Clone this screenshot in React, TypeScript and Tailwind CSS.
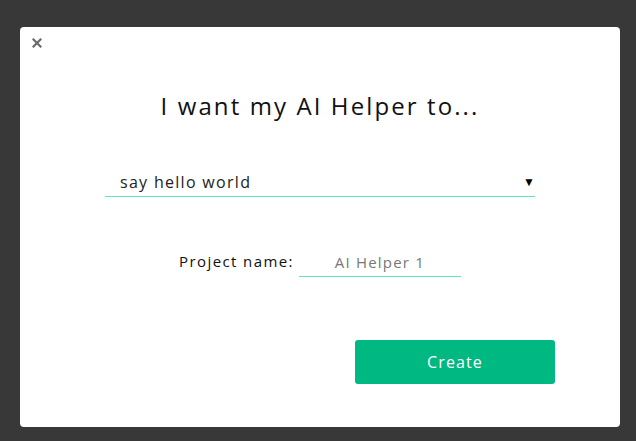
import React from "react";

export default function App() {
  return (
    <div className="w-[636px] h-[441px] bg-[#383838] pt-[27px] pl-[20px]" style={{ fontFamily: "'Open Sans', Lato, sans-serif" }}>
      <div className="relative w-[600px] h-[400px] bg-white rounded-[4px] flex flex-col items-center">
        {/* close */}
        <button className="absolute left-[12px] top-[11px] w-[10px] h-[10px]">
          <svg viewBox="0 0 10 10" width="10" height="10">
            <path d="M1.5 1.5 L8.5 8.5 M8.5 1.5 L1.5 8.5" stroke="#6b6b6b" strokeWidth="2.2" strokeLinecap="square" />
          </svg>
        </button>

        <h1 className="mt-[63px] text-[24px] leading-[32px] text-[#111] tracking-[2.1px]">I want my AI Helper to...</h1>

        <div className="mt-[45px] w-[430px] h-[30px] flex items-center justify-between pl-[15px] pr-0 border-b-[1px] border-solid border-[#62e3c3]">
          <span className="text-[16px] text-[#222] tracking-[1.3px]">say hello world</span>
          <span className="text-[12px] text-black">▼</span>
        </div>

        <div className="mt-[52px] flex items-end">
          <span className="text-[15px] text-[#111] mr-[5px] mb-[5px] tracking-[1.4px]">Project name:</span>
          <div className="w-[162px] h-[28px] flex items-center justify-center border-b-[1px] border-solid border-[#62e3c3]">
            <span className="text-[15px] text-[#777] tracking-[1.2px]">AI Helper 1</span>
          </div>
        </div>

        <div className="w-full flex justify-end pr-[65px] mt-[63px]">
          <button className="w-[200px] h-[44px] bg-[#00b882] rounded-[3px] text-white text-[16px] tracking-[1.1px]">Create</button>
        </div>
      </div>
    </div>
  );
}
